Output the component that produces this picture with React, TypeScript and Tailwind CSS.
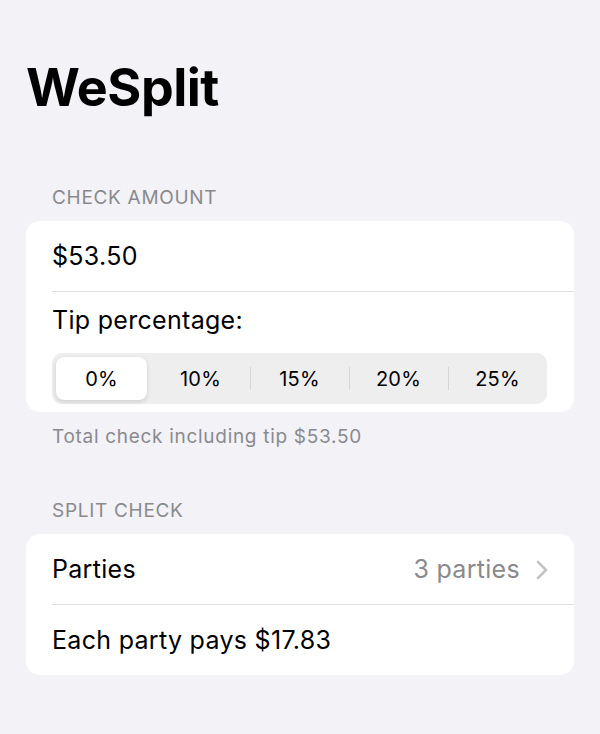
const tips = ['0%', '10%', '15%', '20%', '25%'];

function SectionHeader({ title }: { title: string }) {
  return <div className="pl-[26px] text-[19px] leading-[24px] tracking-[0.7px] text-[#8a8a8e]">{title}</div>;
}

function Divider() {
  return <div className="ml-[26px] h-px bg-[#e0e0e3]" />;
}

function TipPicker({ selected }: { selected: number }) {
  return (
    <div className="flex h-[51px] items-center rounded-[10px] bg-[#eeeeef]">
      {tips.map((tip, i) => (
        <div key={tip} className="relative flex h-full flex-1 items-center justify-center px-[4px] py-[4px]">
          {i > 1 && i !== selected && i - 1 !== selected && (
            <div className="absolute left-0 top-[14px] h-[23px] w-px bg-[#d4d4d8]" />
          )}
          <div
            className={
              i === selected
                ? 'flex h-full w-full items-center justify-center rounded-[8px] bg-white shadow-[0_2px_5px_rgba(0,0,0,0.12),0_0_1px_rgba(0,0,0,0.1)]'
                : 'flex h-full w-full items-center justify-center'
            }
          >
            <span className="text-[20px] tracking-[0.2px] text-black">{tip}</span>
          </div>
        </div>
      ))}
    </div>
  );
}

export default function App() {
  return (
    <div className="min-h-[734px] w-[600px] bg-[#f2f2f7] px-[26px] pt-[58px] font-['Inter','Liberation_Sans',sans-serif] text-black">
      <h1 className="text-[52px] font-bold leading-[60px] tracking-[-0.5px]">WeSplit</h1>

      <div className="mt-[68px]">
        <SectionHeader title="CHECK AMOUNT" />
      </div>
      <div className="mt-[11px] overflow-hidden rounded-[14px] bg-white">
        <div className="flex h-[70px] items-center pl-[26px] pt-[2px] text-[25px] tracking-[0.3px]">$53.50</div>
        <Divider />
        <div className="pb-[8px] pl-[26px] pr-[27px] pt-[13px]">
          <div className="text-[25px] leading-[30px] tracking-[0.3px]">Tip percentage:</div>
          <div className="mt-[18px]">
            <TipPicker selected={0} />
          </div>
        </div>
      </div>
      <div className="mt-[14px] pl-[26px] text-[19px] leading-[22px] tracking-[0.7px] text-[#8a8a8e]">
        Total check including tip $53.50
      </div>

      <div className="mt-[51px]">
        <SectionHeader title="SPLIT CHECK" />
      </div>
      <div className="mt-[11px] overflow-hidden rounded-[14px] bg-white">
        <div className="flex h-[70px] items-center justify-between pl-[26px] pr-[26px] pt-[2px] text-[25px] tracking-[0.3px]">
          <span>Parties</span>
          <span className="flex items-center gap-[16px] text-[#8a8a8e]">
            3 parties
            <svg width="12" height="20" viewBox="0 0 12 20" fill="none">
              <path d="M2 2l8 8-8 8" stroke="#c4c4c7" strokeWidth="2.6" strokeLinecap="round" strokeLinejoin="round" />
            </svg>
          </span>
        </div>
        <Divider />
        <div className="flex h-[70px] items-center pl-[26px] pt-[2px] text-[25px] tracking-[0.3px]">Each party pays $17.83</div>
      </div>
    </div>
  );
}
